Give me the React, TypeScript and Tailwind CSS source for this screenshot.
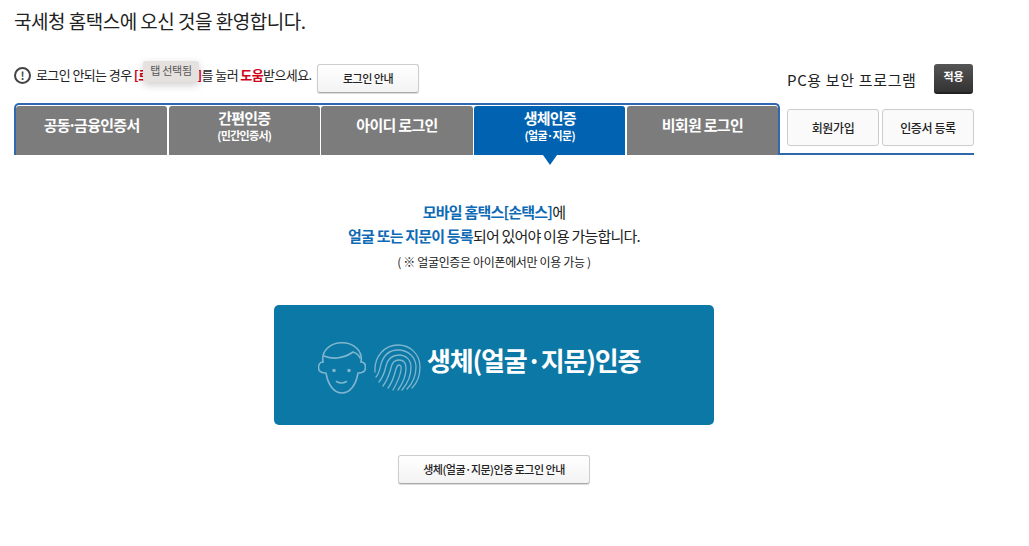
import React from 'react';

const FONT = "font-['Noto_Sans_CJK_KR','Noto_Sans',sans-serif]";

const tabs = [
    { title: '공동', titleEnd: '금융인증서' },
    { title: '간편인증', sub: '(민간인증서)' },
    { title: '아이디 로그인' },
    { title: '생체인증', sub: '(얼굴·지문)', active: true },
    { title: '비회원 로그인' },
];

const FaceIcon = () => (
    <svg className="w-[48px] h-[52px]" viewBox="0 0 48 52" fill="none" stroke="#7fb6cf" strokeWidth={1.6} strokeLinecap="round" strokeLinejoin="round">
        <path d="M5 20C3 9 12 .8 24 .8S45 9 43 20" />
        <path d="M6 14c5 2 9 2.500 13 2 7-1 12-3 16-6 3 1 6 3 7 6" />
        <path d="M5 20c-3 0-4.500 2.500-4.500 5.500S3 31 8 31c2 12 8 20 16 20s14-8 16-20c5 0 7.500-2.500 7.500-5.500S46 20 43 20" />
        <circle cx="16" cy="28.500" r="1" fill="#7fb6cf" />
        <circle cx="31" cy="28.500" r="1" fill="#7fb6cf" />
        <path d="M18.500 39.500c3 1.800 7 1.800 10 0" />
    </svg>
);

const FingerprintIcon = () => (
    <svg className="w-[48px] h-[48px]" viewBox="0 0 48 48" fill="none" stroke="#7fb6cf" strokeWidth={1.3} strokeLinecap="round">
        <path d="M1 28C0 12 11 1 24 1c12 0 22 9 22 22 0 9-2 15-8 21" />
        <path d="M2 33c3-3 4-9 5-13C10 10 17 6 24 6c10 0 18 7 18 17 0 8-3 16-9 22" />
        <path d="M5 38c4-5 6-11 7-16 2-8 7-11 13-11 7 0 12 5 12 12 0 8-3 16-9 23" />
        <path d="M9 42c4-5 6-11 8-18 1-6 4-8 8-8 5 0 7 3 7 8 0 8-3 15-8 22" />
        <path d="M14 44c4-5 6-11 8-19 1-3 2-4 3-4 2 0 2.500 2 2 5-1 7-4 13-8 20" />
    </svg>
);

export default function App() {
    return (
        <div className={`relative w-[1029px] h-[546px] overflow-hidden bg-white text-[#222] ${FONT}`}>
            {/* Title */}
            <h1 className="pl-[14px] pt-[7px] h-[64px] text-[19px] leading-[27px] font-normal tracking-[-0.5px]">
                국세청 홈택스에 오신 것을 환영합니다.
            </h1>

            {/* Help row + security program */}
            <div className="flex pl-[14px] h-[39px]">
                <div className="flex items-start w-[773px]">
                    <span className="mt-[3px] w-[17px] h-[17px] rounded-full border-2 border-[#444] flex items-center justify-center text-[11px] leading-none font-bold text-[#444]">!</span>
                    <p className="ml-[5px] mt-[1px] w-[281px] text-[13px] leading-[20px] tracking-[-0.6px] whitespace-nowrap">
                        로그인 안되는 경우 <b className="text-[#d0021b]">[로그인 안내]</b>를 눌러 <b className="text-[#d0021b]">도움</b>받으세요.
                    </p>
                    <button className="w-[102px] h-[29px] rounded-[3px] border border-[#ccc] border-b-[#aaa] bg-gradient-to-b from-white to-[#f3f3f3] shadow-[0_1px_1px_rgba(0,0,0,0.15)] text-[11px] font-medium tracking-[-0.5px]">
                        로그인 안내
                    </button>
                </div>
                <div className="flex items-start">
                    <span className="mt-[4px] w-[147px] text-[15px] leading-[24px] tracking-[0.65px] whitespace-nowrap">PC용 보안 프로그램</span>
                    <button className="w-[39px] h-[30px] rounded-[3px] bg-gradient-to-b from-[#555] to-[#333] border-b-2 border-[#222] text-white text-[11px] font-bold pb-[4px]">적용</button>
                </div>
            </div>

            {/* Tabs */}
            <div className="flex pl-[14px] h-[52px]">
                <div className="flex items-start gap-[1.5px] w-[766px] h-[52px] border-2 border-b-0 border-[#2f68ae] rounded-t-[5px] pt-[1px]">
                    {tabs.map((tab) => (
                        <div key={tab.title} className={`relative flex-1 h-[49px] rounded-t-[3px] text-white text-center ${tab.active ? 'bg-[#0062b0]' : 'bg-[#7c7c7c]'}`}>
                            {tab.sub ? (
                                <div className="pt-[1px]">
                                    <div className="text-[15px] leading-[21px] font-bold tracking-[-0.8px]">{tab.title}</div>
                                    <div className="text-[11px] leading-[14px] font-bold tracking-[-0.7px]">{tab.sub}</div>
                                </div>
                            ) : (
                                <div className="pt-[8px] text-[15px] leading-[21px] font-bold tracking-[-0.7px]">
                                    {tab.title}
                                    {tab.titleEnd && <><span className="-mx-[2px]">·</span>{tab.titleEnd}</>}
                                </div>
                            )}
                            {tab.active && (
                                <span className="absolute left-1/2 top-[49px] -translate-x-1/2 border-x-[7px] border-x-transparent border-t-[10px] border-t-[#0062b0]" />
                            )}
                        </div>
                    ))}
                </div>
                <div className="flex gap-[3px] w-[194px] h-[52px] pl-[7px] pt-[6px] border-b-2 border-[#2f68ae]">
                    <button className="w-[92px] h-[37px] rounded-[3px] border border-[#ccc] bg-[#fafafa] text-[12px] font-medium tracking-[-0.4px]">회원가입</button>
                    <button className="w-[92px] h-[37px] rounded-[3px] border border-[#ccc] bg-[#fafafa] text-[12px] font-medium tracking-[-0.4px]">인증서 등록</button>
                </div>
            </div>

            {/* Notice */}
            <div className="w-[988px] pt-[45px] text-center">
                <p className="text-[15px] leading-[24px] tracking-[-0.8px]">
                    <b className="font-semibold text-[#0e6ab5]">모바일 홈택스[손택스]</b>에
                </p>
                <p className="text-[15px] leading-[24px] tracking-[-0.8px]">
                    <b className="font-semibold text-[#0e6ab5]">얼굴 또는 지문이 등록</b>되어 있어야 이용 가능합니다.
                </p>
                <p className="mt-[4px] text-[12px] leading-[20px] tracking-[-0.35px]">( ※ 얼굴인증은 아이폰에서만 이용 가능 )</p>
            </div>

            {/* Biometric login */}
            <button className="flex items-center ml-[274px] mt-[33px] w-[440px] h-[120px] rounded-[5px] bg-[#0c78a6] pl-[44px] pt-[6px] text-white">
                <FaceIcon />
                <span className="ml-[8px]"><FingerprintIcon /></span>
                <span className="ml-[5px] pb-[16px] text-[26px] leading-[36px] font-bold tracking-[-1.2px] whitespace-nowrap">생체(얼굴·지문)인증</span>
            </button>

            <button className="block ml-[398px] mt-[30px] w-[192px] h-[29px] rounded-[3px] border border-[#ccc] border-b-[#aaa] bg-gradient-to-b from-white to-[#f3f3f3] shadow-[0_1px_1px_rgba(0,0,0,0.15)] text-[11px] font-medium tracking-[-0.5px]">
                생체(얼굴·지문)인증 로그인 안내
            </button>

            {/* Tooltip */}
            <div className="absolute left-[143px] top-[61px] w-[56px] h-[21px] rounded-[3px] bg-[#e5e1df] shadow-[0_3px_8px_rgba(0,0,0,0.2)] text-center text-[11px] leading-[19px] tracking-[-0.3px] text-[#555]">
                탭 선택됨
            </div>
        </div>
    );
}
